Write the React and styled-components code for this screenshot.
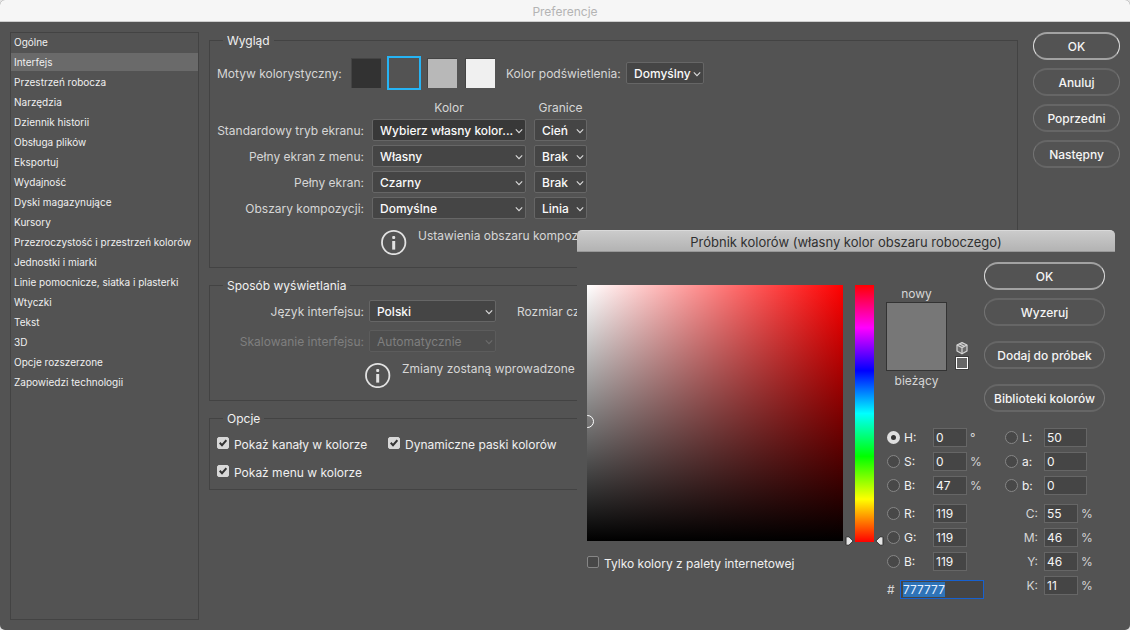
import React, { useEffect, useRef } from "react";
import styled, { createGlobalStyle, css } from "styled-components";

const GlobalStyle = createGlobalStyle`
  *, *::before, *::after { box-sizing: border-box; }
  body { margin: 0; background: #e4e4e4; }
  body, button, input, select {
    font-family: Inter, "Liberation Sans", sans-serif;
    font-size: 12px;
    line-height: 16px;
  }
`;

const Window = styled.div`
  position: relative;
  min-height: 100vh;
  display: flex;
  flex-direction: column;
  background: #535353;
  color: #d6d6d6;
  border-radius: 5px;
  overflow: hidden;
`;

const TitleBar = styled.header`
  height: 22px;
  padding-top: 4px;
  background: #f6f6f6;
  border-bottom: 1px solid #cdcdcd;
  color: #b4b4b4;
  text-align: center;
`;

const Title = styled.h1`
  margin: 0;
  font-size: 12px;
  font-weight: 400;
`;

const Body = styled.div`
  flex: 1;
  display: flex;
  padding: 10px;
`;

const Sidebar = styled.nav`
  flex: 0 0 189px;
  border: 1px solid #434343;
`;

const CategoryList = styled.ul`
  margin: 0;
  padding: 0;
  list-style: none;
`;

const Category = styled.a`
  display: block;
  height: 18px;
  margin-bottom: 2px;
  padding: 0 3px;
  font-size: 10px;
  line-height: 18px;
  white-space: nowrap;
  text-decoration: none;
  color: #f0f0f0;
  background: ${(p) => (p.$active ? "#6a6a6a" : "transparent")};
`;

const Panels = styled.main`
  flex: 1;
  min-width: 0;
  display: flex;
  flex-direction: column;
  gap: 9px;
  margin: 0 15px 0 10px;
`;

const Panel = styled.fieldset`
  min-width: 0;
  margin: 0;
  padding: ${(p) => p.$padding};
  border: 1px solid #434343;
`;

const Legend = styled.legend`
  height: 16px;
  margin-left: 6px;
  padding: 1px 4px 0;
  color: #f0f0f0;
`;

const ButtonColumn = styled.div`
  flex: 0 0 ${(p) => p.$width};
  display: flex;
  flex-direction: column;
  gap: 8px;
`;

const PillButton = styled.button`
  height: 28px;
  padding: 2px 0 0;
  border-radius: 14px;
  border-style: solid;
  border-width: 2px 1px;
  border-color: ${(p) => (p.$primary ? "#a2a2a2 #dcdcdc" : "#666 #747474")};
  background: transparent;
  color: #f5f5f5;
  font-weight: 500;
  white-space: nowrap;
  margin-top: ${(p) => (p.$spaced ? "7px" : "0")};
`;

const SelectFrame = styled.span`
  position: relative;
  display: block;
  width: ${(p) => p.$width};
  color: ${(p) => (p.$disabled ? "#6c6c6c" : "#dcdcdc")};
  svg {
    position: absolute;
    right: 3px;
    top: 9px;
    pointer-events: none;
  }
`;

const SelectBox = styled.select`
  appearance: none;
  display: block;
  width: 100%;
  height: 22px;
  margin: 0;
  padding: 2px 11px 0 7px;
  border: 1px solid #666;
  border-radius: 2px;
  background: ${(p) => (p.$dark ? "#383838" : "#454545")};
  color: #fafafa;
  font-weight: 500;
  text-overflow: ellipsis;
  &:disabled {
    background: #4e4e4e;
    border-color: #5c5c5c;
    color: #7f7f7f;
    opacity: 1;
    font-weight: 400;
  }
`;

function Select({ id, value, width, dark, disabled, label }) {
  return (
    <SelectFrame $width={width} $disabled={disabled}>
      <SelectBox id={id} $dark={dark} disabled={disabled} aria-label={label} defaultValue={value}>
        <option>{value}</option>
      </SelectBox>
      <svg width="8" height="7" viewBox="0 0 8 7" fill="none" stroke="currentColor" strokeWidth="1.1">
        <path d="M0.8 1.4 L4 4.6 L7.2 1.4" />
      </svg>
    </SelectFrame>
  );
}

const ThemeRow = styled.div`
  display: flex;
  align-items: center;
  margin-bottom: 9px;
`;

const ThemeLabel = styled.span`
  width: 132px;
  padding-top: 2px;
  white-space: nowrap;
`;

const Swatches = styled.div`
  display: flex;
  gap: 4px;
  margin-right: 9px;
`;

const Swatch = styled.input`
  appearance: none;
  width: 30px;
  height: 30px;
  margin: 2px;
  border: 1px solid #444;
  border-right: 0;
  border-bottom: 0;
  background: ${(p) => p.$color};
  &:checked {
    width: 34px;
    height: 34px;
    margin: 0;
    border: 2px solid #26b4f5;
  }
`;

const HighlightLabel = styled.label`
  width: 120px;
  padding-top: 2px;
  white-space: nowrap;
`;

const ModeGrid = styled.div`
  display: grid;
  grid-template-columns: 147px 154px 53px;
  gap: 4px 8px;
  align-items: center;
`;

const ColumnHead = styled.span`
  height: 16px;
  padding-top: 1px;
  text-align: center;
`;

const RightLabel = styled.label`
  padding-top: 2px;
  text-align: right;
  white-space: nowrap;
  color: ${(p) => (p.$dim ? "#7f7f7f" : "inherit")};
`;

const InfoRow = styled.div`
  display: flex;
  gap: 11px;
  margin-top: 9px;
  padding-left: ${(p) => p.$indent};
  white-space: nowrap;
  svg { flex: none; margin-top: 1px; }
`;

function InfoIcon() {
  return (
    <svg width="26" height="26" viewBox="0 0 26 26" aria-hidden="true">
      <circle cx="12.7" cy="13.5" r="11.7" fill="none" stroke="#e2e2e2" strokeWidth="1.8" />
      <rect x="11.2" y="7" width="3" height="3" rx="1" fill="#e2e2e2" />
      <rect x="11.2" y="12" width="3" height="8.6" fill="#e2e2e2" />
    </svg>
  );
}

const DisplayGrid = styled.div`
  display: grid;
  grid-template-columns: 147px 127px auto;
  justify-content: start;
  gap: 8px 5px;
  align-items: center;
`;

const FontSizeLabel = styled.span`
  margin-left: 16px;
  padding-top: 2px;
  white-space: nowrap;
`;

const OptionsGrid = styled.div`
  display: grid;
  grid-template-columns: 171px auto;
  justify-content: start;
  gap: 12px 0;
`;

const CheckLabel = styled.label`
  display: flex;
  gap: 5px;
  height: 16px;
  padding-top: 1px;
  color: #f0f0f0;
  white-space: nowrap;
`;

const CheckMark = styled.span`
  position: relative;
  display: flex;
  svg { position: absolute; left: 2px; top: 2px; pointer-events: none; }
`;

const CheckInput = styled.input`
  appearance: none;
  width: 12px;
  height: 12px;
  margin: 0;
  border: 1px solid #868686;
  border-radius: 2px;
  background: #484848;
  &:checked { background: #d8d8d8; border-color: #d8d8d8; }
`;

function Checkbox({ checked, children }) {
  return (
    <CheckLabel>
      <CheckMark>
        <CheckInput type="checkbox" defaultChecked={checked} />
        {checked && (
          <svg width="8" height="8" viewBox="0 0 8 8" fill="none" stroke="#333" strokeWidth="2">
            <path d="M0.7 3.8 L3 6.2 L7.4 1.2" />
          </svg>
        )}
      </CheckMark>
      {children}
    </CheckLabel>
  );
}

const Dialog = styled.section`
  position: absolute;
  top: 230px;
  right: 15px;
  width: 538px;
  background: #535353;
  border-radius: 5px 5px 0 0;
`;

const DialogTitle = styled.h2`
  height: 22px;
  margin: 0;
  padding-top: 3px;
  border-radius: 5px 5px 0 0;
  border-top: 1px solid #dadada;
  border-bottom: 1px solid #989898;
  background: linear-gradient(#cbcbcb, #b3b3b3);
  color: #303030;
  font-size: 13px;
  font-weight: 400;
  text-align: center;
`;

const DialogBody = styled.div`
  display: flex;
  gap: 12px;
  padding: 10px;
`;

const PickerColumn = styled.div`
  padding-top: 23px;
`;

const PickerRow = styled.div`
  display: flex;
  gap: 12px;
  margin-bottom: 13px;
`;

const ColorField = styled.div`
  position: relative;
  width: 256px;
  height: 256px;
  overflow: hidden;
  background: linear-gradient(to top, #000, transparent), linear-gradient(to right, #fff, #f00);
`;

const FieldMarker = styled.span`
  position: absolute;
  left: -6px;
  top: 130px;
  width: 13px;
  height: 13px;
  border: 1px solid #fff;
  border-radius: 50%;
`;

const HueStrip = styled.div`
  position: relative;
  width: 19px;
  height: 257px;
  background: linear-gradient(#f00, #f0f, #00f, #0ff, #0f0, #ff0, #f00);
`;

const HueArrow = styled.svg`
  position: absolute;
  bottom: -4px;
  ${(p) => (p.$side === "left" ? css`left: -10px;` : css`right: -10px; transform: scaleX(-1);`)}
`;

const ControlColumn = styled.div`
  flex: 1;
  display: flex;
  flex-direction: column;
  gap: 16px;
`;

const TopRow = styled.div`
  display: flex;
`;

const Preview = styled.div`
  width: 61px;
  margin: 24px 8px 0 0;
  text-align: center;
`;

const PreviewSwatch = styled.div`
  height: 69px;
  margin: 0 0 2px;
  border: 1px solid #333;
  background: #777;
`;

const WebSafe = styled.div`
  width: 14px;
  margin: 79px 15px 0 0;
  svg { display: block; }
`;

const WebSafeColor = styled.button`
  display: block;
  width: 14px;
  height: 14px;
  margin-top: 1px;
  padding: 0;
  border: 1px solid #3c3c3c;
  background: #666;
  box-shadow: inset 0 0 0 1px #fff;
`;

const FieldColumns = styled.div`
  display: grid;
  grid-template-columns: 118px auto;
  justify-content: start;
  align-items: start;
  padding-left: 1px;
`;

const FieldGroups = styled.div`
  display: flex;
  flex-direction: column;
  gap: 9px;
`;

const FieldGroup = styled.div`
  display: flex;
  flex-direction: column;
  gap: 5px;
`;

const FieldRow = styled.div`
  display: flex;
  align-items: center;
  height: 19px;
`;

const RadioLabel = styled.label`
  display: flex;
  align-items: center;
  gap: 4px;
  width: ${(p) => p.$width};
  color: #f0f0f0;
`;

const RadioInput = styled.input`
  appearance: none;
  width: 13px;
  height: 13px;
  margin: 0;
  border: 1px solid #868686;
  border-radius: 50%;
  background: #484848;
  &:checked { border: 4px solid #dedede; background: #333; }
`;

const PlainLabel = styled.label`
  width: 33px;
  margin-right: 6px;
  text-align: right;
`;

const NumberInput = styled.input`
  width: ${(p) => p.$width};
  height: 19px;
  margin: 0;
  padding: 0 2px;
  border: 1px solid #666;
  border-radius: 0;
  background: #454545;
  color: #f5f5f5;
`;

const Unit = styled.span`
  margin-left: 3px;
`;

const HexLabel = styled.label`
  width: 13px;
`;

const HexInput = styled(NumberInput)`
  border-color: #1761d0;
  outline: none;
  &::selection { background: #2e73b8; color: #e8f2ff; }
`;

function RadioField({ label, value, unit, checked, labelWidth = "46px", width = "34px" }) {
  return (
    <FieldRow>
      <RadioLabel $width={labelWidth}>
        <RadioInput type="radio" name="component" defaultChecked={checked} />
        {label}
      </RadioLabel>
      <NumberInput $width={width} aria-label={label} defaultValue={value} />
      {unit && <Unit>{unit}</Unit>}
    </FieldRow>
  );
}

function PercentField({ id, label, value }) {
  return (
    <FieldRow>
      <PlainLabel htmlFor={id}>{label}</PlainLabel>
      <NumberInput id={id} $width="34px" defaultValue={value} />
      <Unit>%</Unit>
    </FieldRow>
  );
}

function Arrow({ side }) {
  return (
    <HueArrow $side={side} width="9" height="10" viewBox="0 0 9 10" aria-hidden="true">
      <path d="M1 1.5 Q1 0.8 2 0.8 L4 0.8 L8.2 5 L4 9.2 L2 9.2 Q1 9.2 1 8.5 Z" fill="#e6e6e6" stroke="#2c2c2c" />
    </HueArrow>
  );
}

function ColorPicker() {
  const hex = useRef(null);
  useEffect(() => {
    hex.current.focus();
    hex.current.select();
  }, []);

  return (
    <Dialog role="dialog" aria-labelledby="picker-title">
      <DialogTitle id="picker-title">Próbnik kolorów (własny kolor obszaru roboczego)</DialogTitle>
      <DialogBody>
        <PickerColumn>
          <PickerRow>
            <ColorField><FieldMarker /></ColorField>
            <HueStrip>
              <Arrow side="left" />
              <Arrow side="right" />
            </HueStrip>
          </PickerRow>
          <Checkbox>Tylko kolory z palety internetowej</Checkbox>
        </PickerColumn>
        <ControlColumn>
          <TopRow>
            <Preview>
              nowy
              <PreviewSwatch />
              bieżący
            </Preview>
            <WebSafe>
              <svg width="14" height="14" viewBox="0 0 14 14" fill="none" stroke="#d2d2d2" strokeWidth="1.2" strokeLinejoin="round">
                <path d="M7 1.6 L12 4 V10 L7 12.8 L2 10 V4 Z" fill="#6c6c6c" />
                <path d="M2 4 L7 6.6 L12 4 M7 6.6 V12.8 M4.4 2.9 L9.4 5.3" />
              </svg>
              <WebSafeColor aria-label="Kolor internetowy" />
            </WebSafe>
            <ButtonColumn $width="121px">
              <PillButton $primary>OK</PillButton>
              <PillButton>Wyzeruj</PillButton>
              <PillButton $spaced>Dodaj do próbek</PillButton>
              <PillButton $spaced>Biblioteki kolorów</PillButton>
            </ButtonColumn>
          </TopRow>
          <FieldColumns>
            <FieldGroups>
              <FieldGroup>
                <RadioField label="H:" value="0" unit="°" checked />
                <RadioField label="S:" value="0" unit="%" />
                <RadioField label="B:" value="47" unit="%" />
              </FieldGroup>
              <FieldGroup>
                <RadioField label="R:" value="119" />
                <RadioField label="G:" value="119" />
                <RadioField label="B:" value="119" />
              </FieldGroup>
              <FieldRow>
                <HexLabel htmlFor="hex">#</HexLabel>
                <HexInput id="hex" ref={hex} $width="84px" defaultValue="777777" />
              </FieldRow>
            </FieldGroups>
            <FieldGroups>
              <FieldGroup>
                <RadioField label="L:" value="50" labelWidth="39px" width="43px" />
                <RadioField label="a:" value="0" labelWidth="39px" width="43px" />
                <RadioField label="b:" value="0" labelWidth="39px" width="43px" />
              </FieldGroup>
              <FieldGroup>
                <PercentField id="cyan" label="C:" value="55" />
                <PercentField id="magenta" label="M:" value="46" />
                <PercentField id="yellow" label="Y:" value="46" />
                <PercentField id="black" label="K:" value="11" />
              </FieldGroup>
            </FieldGroups>
          </FieldColumns>
        </ControlColumn>
      </DialogBody>
    </Dialog>
  );
}

const categories = [
  "Ogólne",
  "Interfejs",
  "Przestrzeń robocza",
  "Narzędzia",
  "Dziennik historii",
  "Obsługa plików",
  "Eksportuj",
  "Wydajność",
  "Dyski magazynujące",
  "Kursory",
  "Przezroczystość i przestrzeń kolorów",
  "Jednostki i miarki",
  "Linie pomocnicze, siatka i plasterki",
  "Wtyczki",
  "Tekst",
  "3D",
  "Opcje rozszerzone",
  "Zapowiedzi technologii",
];

const themes = [
  { name: "Ciemny", color: "#323232" },
  { name: "Średnio ciemny", color: "#535353" },
  { name: "Średnio jasny", color: "#b8b8b8" },
  { name: "Jasny", color: "#f0f0f0" },
];

const screenModes = [
  { id: "standard", label: "Standardowy tryb ekranu:", color: "Wybierz własny kolor...", border: "Cień", dark: true },
  { id: "full-menu", label: "Pełny ekran z menu:", color: "Własny", border: "Brak" },
  { id: "full", label: "Pełny ekran:", color: "Czarny", border: "Brak" },
  { id: "artboards", label: "Obszary kompozycji:", color: "Domyślne", border: "Linia" },
];

export default function App() {
  return (
    <>
      <GlobalStyle />
      <Window>
        <TitleBar><Title>Preferencje</Title></TitleBar>
        <Body>
          <Sidebar>
            <CategoryList>
              {categories.map((name) => (
                <li key={name}>
                  <Category href="#" $active={name === "Interfejs"}>{name}</Category>
                </li>
              ))}
            </CategoryList>
          </Sidebar>
          <Panels>
            <Panel $padding="8px 7px 12px">
              <Legend>Wygląd</Legend>
              <ThemeRow>
                <ThemeLabel>Motyw kolorystyczny:</ThemeLabel>
                <Swatches>
                  {themes.map((t, i) => (
                    <Swatch key={t.name} type="radio" name="theme" aria-label={t.name} $color={t.color} defaultChecked={i === 1} />
                  ))}
                </Swatches>
                <HighlightLabel htmlFor="highlight">Kolor podświetlenia:</HighlightLabel>
                <Select id="highlight" value="Domyślny" width="78px" />
              </ThemeRow>
              <ModeGrid>
                <span />
                <ColumnHead>Kolor</ColumnHead>
                <ColumnHead>Granice</ColumnHead>
                {screenModes.map((m) => (
                  <React.Fragment key={m.id}>
                    <RightLabel htmlFor={m.id}>{m.label}</RightLabel>
                    <Select id={m.id} value={m.color} width="100%" dark={m.dark} />
                    <Select value={m.border} width="100%" label="Granice" />
                  </React.Fragment>
                ))}
              </ModeGrid>
              <InfoRow $indent="164px">
                <InfoIcon />
                Ustawienia obszaru kompozycji
              </InfoRow>
            </Panel>
            <Panel $padding="7px 7px 12px">
              <Legend>Sposób wyświetlania</Legend>
              <DisplayGrid>
                <RightLabel htmlFor="language">Język interfejsu:</RightLabel>
                <Select id="language" value="Polski" width="100%" />
                <FontSizeLabel>Rozmiar czcionki</FontSizeLabel>
                <RightLabel htmlFor="scaling" $dim>Skalowanie interfejsu:</RightLabel>
                <Select id="scaling" value="Automatycznie" width="100%" disabled />
              </DisplayGrid>
              <InfoRow $indent="148px">
                <InfoIcon />
                Zmiany zostaną wprowadzone po
              </InfoRow>
            </Panel>
            <Panel $padding="10px 7px 9px">
              <Legend>Opcje</Legend>
              <OptionsGrid>
                <Checkbox checked>Pokaż kanały w kolorze</Checkbox>
                <Checkbox checked>Dynamiczne paski kolorów</Checkbox>
                <Checkbox checked>Pokaż menu w kolorze</Checkbox>
              </OptionsGrid>
            </Panel>
          </Panels>
          <ButtonColumn $width="87px">
            <PillButton $primary>OK</PillButton>
            <PillButton>Anuluj</PillButton>
            <PillButton>Poprzedni</PillButton>
            <PillButton>Następny</PillButton>
          </ButtonColumn>
        </Body>
        <ColorPicker />
      </Window>
    </>
  );
}
